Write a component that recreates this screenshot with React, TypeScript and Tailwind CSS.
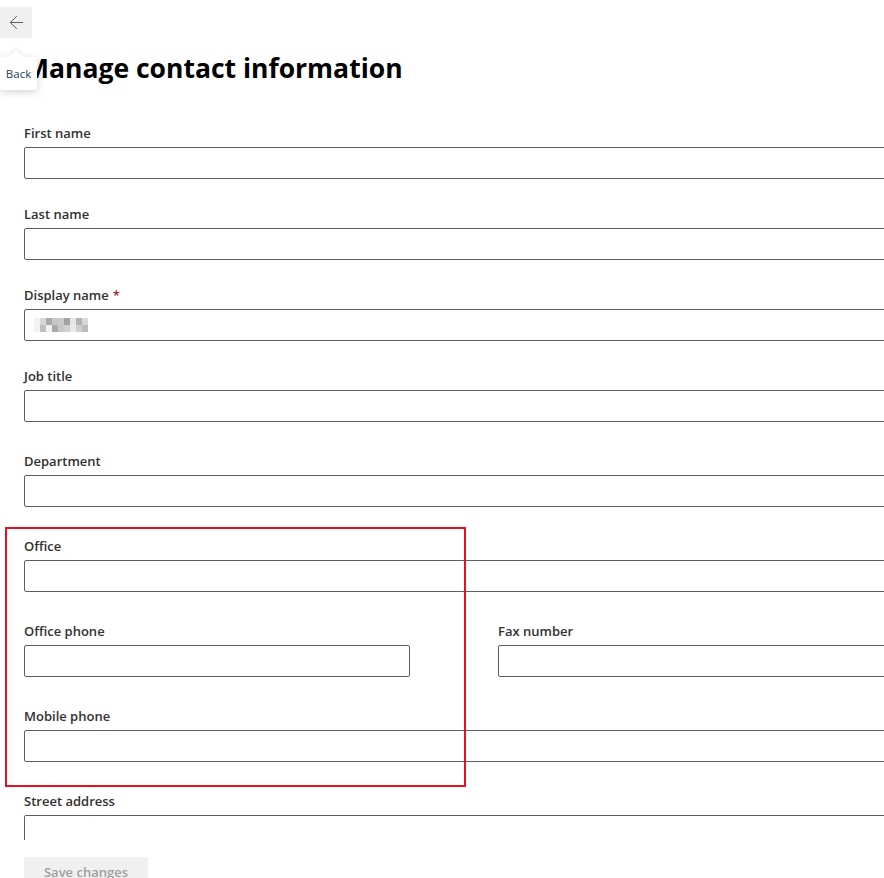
import { ArrowLeft } from "lucide-react";

const blurRows = [
  ["#f2f2f2", "#d6d6d6", "#a9a9a9", "#c6c6c6", "#c9c9c9", "#a3a3a3", "#e6e6e6", "#b2b2b2", "#d8d8d8"],
  ["#f4f4f4", "#bfbfbf", "#f3f3f3", "#aaaaaa", "#c8c8c8", "#d1d1d1", "#e9e9e9", "#cfcfcf", "#bababa"],
];

function Field({
  label,
  required,
  gap,
  blurred,
  width,
}: {
  label: string;
  required?: boolean;
  gap: string;
  blurred?: boolean;
  width?: string;
}) {
  return (
    <div className={`flex flex-col ${gap} ${width ?? "w-[862px]"}`}>
      <label className="h-[20px] text-[13px] leading-[20px] font-semibold text-[#323130]">
        {label}
        {required && <span className="text-[#a4262c] ml-1">*</span>}
      </label>
      <div className="mt-[4px] h-[32px] rounded-[2px] border border-[#605e5c] bg-white flex items-center px-[9px]">
        {blurred && (
          <div className="flex flex-col">
            {blurRows.map((row, i) => (
              <div key={i} className="flex">
                {row.map((c, j) => (
                  <div key={j} className="w-[6px] h-[7px]" style={{ backgroundColor: c }} />
                ))}
              </div>
            ))}
          </div>
        )}
      </div>
    </div>
  );
}

export default function App() {
  return (
    <div
      className="relative w-[884px] h-[878px] overflow-hidden bg-white text-[#323130]"
      style={{ fontFamily: '"Open Sans", "Noto Sans", sans-serif' }}
    >
      <div className="pt-[7px]">
        <button className="w-[32px] h-[31px] rounded-[2px] bg-[#f0f0f0] flex items-center justify-center text-[#555]">
          <ArrowLeft size={21} strokeWidth={1.1} />
        </button>
      </div>

      <h1 className="mt-[12px] pl-[24px] h-[36px] text-[26.5px] leading-[36px] font-bold text-black whitespace-nowrap">
        Manage contact information
      </h1>

      <div className="h-[754px] overflow-hidden pt-[37px] pl-[24px]">
        <div className="flex flex-col w-[900px]">
          <Field label="First name" gap="mb-[25px]" />
          <Field label="Last name" gap="mb-[25px]" />
          <Field label="Display name" required blurred gap="mb-[25px]" />
          <Field label="Job title" gap="mb-[29px]" />
          <Field label="Department" gap="mb-[29px]" />
          <Field label="Office" gap="mb-[29px]" />
          <div className="flex gap-[88px] mb-[29px]">
            <Field label="Office phone" gap="" width="w-[386px]" />
            <Field label="Fax number" gap="" width="w-[388px]" />
          </div>
          <Field label="Mobile phone" gap="mb-[29px]" />
          <Field label="Street address" gap="mb-[29px]" />
        </div>
      </div>

      <div className="pt-[17px] pl-[24px]">
        <button className="h-[32px] w-[124px] rounded-[2px] bg-[#f0f0f0] text-[13px] font-semibold text-[#a19f9d]">
          Save changes
        </button>
      </div>

      {/* tooltip */}
      <div className="absolute left-0 top-[57px] w-[37px] h-[33px] bg-white rounded-[2px] shadow-[0_2px_8px_rgba(0,0,0,0.18)] flex items-center justify-center text-[11.5px] text-[#243a5e]">
        <div className="absolute -top-[5px] left-[11px] w-[10px] h-[10px] bg-white rotate-45 shadow-[-2px_-2px_4px_rgba(0,0,0,0.06)]" />
        <span className="relative">Back</span>
      </div>

      {/* annotation */}
      <div className="absolute left-[5px] top-[527px] w-[461px] h-[260px] border-2 border-[#e81123]" />
    </div>
  );
}
